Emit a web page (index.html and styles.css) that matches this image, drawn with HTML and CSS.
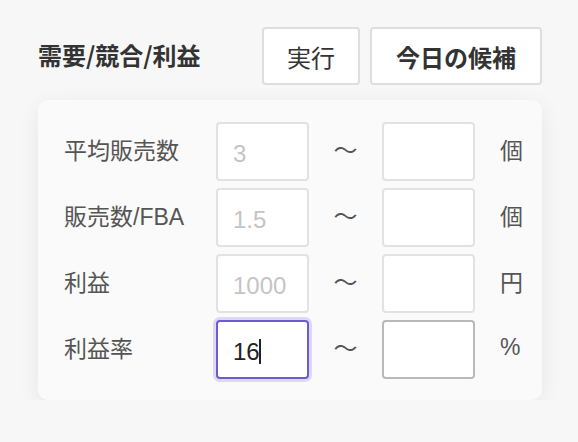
FILE: index.html
```html
<!DOCTYPE html>
<html>
 <head>
  <meta charset="utf-8">
  <link rel="stylesheet" href="styles.css">
 </head>
 <body>
  <div class="page">
   <div class="head">
    <h1 class="title">需要/競合/利益</h1>
    <div class="btns">
     <button class="button">実行</button>
     <button class="button strong">今日の候補</button>
    </div>
   </div>

   <div class="card">
    <div class="grid">
     <span class="label">平均販売数</span>
     <input class="box" placeholder="3">
     <span class="tilde">〜</span>
     <input class="box">
     <span class="unit">個</span>

     <span class="label">販売数/FBA</span>
     <input class="box" placeholder="1.5">
     <span class="tilde">〜</span>
     <input class="box">
     <span class="unit">個</span>

     <span class="label">利益</span>
     <input class="box" placeholder="1000">
     <span class="tilde">〜</span>
     <input class="box">
     <span class="unit">円</span>

     <span class="label">利益率</span>
     <div class="wrap">
      <input class="box focus" value="16">
      <i class="caret"></i>
     </div>
     <span class="tilde">〜</span>
     <input class="box hover">
     <span class="unit">%</span>
    </div>
   </div>
  </div>
 </body>
</html>
```

FILE: styles.css
```css
body {
  margin: 0;
  background: #f7f7f7;
  font-family: "Liberation Sans", "Noto Sans CJK JP", sans-serif;
  color: #444;
}
.page {
  width: 504px;
  padding: 27px 0 0 38px;
}
.head {
  display: flex;
  justify-content: space-between;
  align-items: center;
}
.title {
  margin: -3px 0 0 0;
  font-family: "Noto Sans CJK JP", sans-serif;
  font-size: 24px;
  font-weight: bold;
  color: #333;
}
.btns {
  display: flex;
  gap: 10px;
}
.button {
  font-family: inherit;
  font-size: 24px;
  color: #333;
  background: #fff;
  border: 2px solid #dedede;
  border-radius: 4px;
  height: 58px;
  padding: 0 23px;
}
.strong {
  font-weight: bold;
  padding: 0 24px;
}

.card {
  margin-top: 15px;
  background: #fafafa;
  border-radius: 10px;
  box-shadow: 0 6px 22px rgba(0, 0, 0, 0.07);
  padding: 22px 0 21px 26px;
}
.grid {
  display: grid;
  grid-template-columns: 152px 93px 73px 93px auto;
  grid-auto-rows: 59px;
  row-gap: 7px;
  align-items: center;
}
.label {
  font-size: 23px;
  color: #555;
  margin-top: -5px;
}
.box {
  box-sizing: border-box;
  width: 93px;
  height: 59px;
  border: 2px solid #e2e2e2;
  border-radius: 4px;
  background: #fff;
  padding: 4px 0 0 15px;
  font-family: inherit;
  font-size: 24px;
  color: #222;
  outline: none;
}
.box::placeholder {
  color: #c4c4c4;
}
.hover {
  border-color: #b9b9b9;
}
.focus {
  border-color: #6c5ad6;
  box-shadow: 0 0 0 3px #ddd8f6;
}
.wrap {
  position: relative;
  height: 59px;
}
.caret {
  position: absolute;
  left: 43px;
  top: 19px;
  width: 2px;
  height: 25px;
  background: #222;
}
.tilde {
  text-align: center;
  font-size: 24px;
  color: #555;
  margin-top: -6px;
}
.unit {
  margin-left: 25px;
  font-size: 23px;
  color: #555;
  margin-top: -5px;
}
```
